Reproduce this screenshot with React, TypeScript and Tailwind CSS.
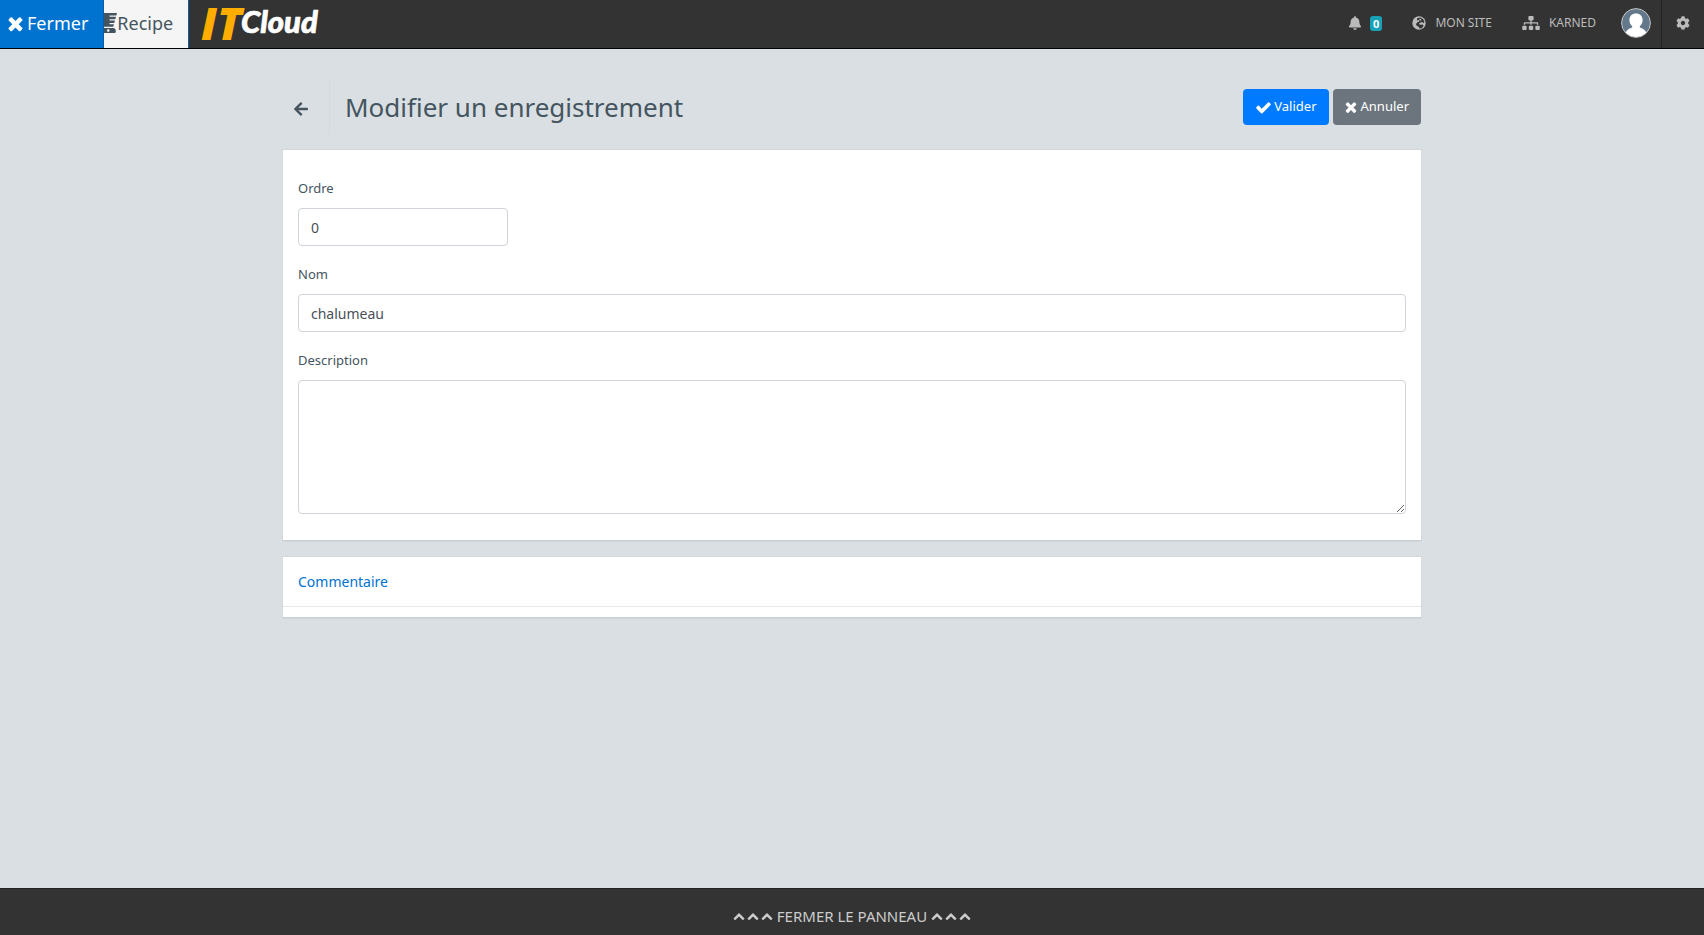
import React from "react";
import { FaArrowLeft, FaBell, FaBlender, FaCog, FaSitemap } from "react-icons/fa";

function Glyph({ d, className }: { d: string; className: string }) {
  return (
    <svg viewBox="0 0 1792 1792" fill="currentColor" aria-hidden="true" className={className}>
      <path d={d} />
    </svg>
  );
}

const CROSS =
  "M1490 1322q0 40-28 68l-136 136q-28 28-68 28t-68-28l-294-294-294 294q-28 28-68 28t-68-28l-136-136q-28-28-28-68t28-68l294-294-294-294q-28-28-28-68t28-68l136-136q28-28 68-28t68 28l294 294 294-294q28-28 68-28t68 28l136 136q28 28 28 68t-28 68l-294 294 294 294q28 28 28 68z";
const TICK =
  "M1671 566q0 40-28 68l-724 724-136 136q-28 28-68 28t-68-28l-136-136-362-362q-28-28-28-68t28-68l136-136q28-28 68-28t68 28l294 295 656-657q28-28 68-28t68 28l136 136q28 28 28 68z";
const CHEVRON =
  "M1683 1331l-166 165q-19 19-45 19t-45-19l-531-531-531 531q-19 19-45 19t-45-19l-166-165q-19-19-19-45.500t19-45.500l742-741q19-19 45-19t45 19l742 741q19 19 19 45.500t-19 45.500z";

function Globe() {
  return (
    <svg viewBox="0 0 14 14" className="size-[14px]" aria-hidden="true">
      <circle cx="7" cy="7" r="6.700" fill="currentColor" />
      <path
        d="M5.200 2.200 8 1.600l3 1.500 1.400 2.700-.6 1.400-1.600-1.200-1.500.5-1.900 1.200 1.200 1 2.600-.2 1 1.200-1.800 2.500-2.300.3-.8-1.700-2-1-.8-1.900 1.600-1.600 1.900-.9-.5-1.400-1.900.5z"
        fill="#333333"
      />
      <path d="M7.200 2.700 9 3l.3 1.400-1.600.3z" fill="currentColor" />
    </svg>
  );
}

function Logo() {
  return (
    <svg width="120" height="40" viewBox="0 0 120 40" role="img" aria-label="IT Cloud" className="overflow-visible">
      <text
        x="0"
        y="36"
        fontFamily="Open Sans, sans-serif"
        fontWeight="800"
        fontStyle="italic"
        fontSize="45"
        fill="#ffae00"
      >
        IT
      </text>
      <text
        x="40"
        y="29"
        fontFamily="Lato, sans-serif"
        fontWeight="900"
        fontStyle="italic"
        fontSize="31"
        fill="#ffffff"
        stroke="#ffffff"
        strokeWidth="0.700"
        strokeLinejoin="round"
      >
        Cloud
      </text>
    </svg>
  );
}

function Avatar() {
  return (
    <svg className="size-[30px]" viewBox="0 0 30 30" aria-hidden="true">
      <defs>
        <clipPath id="avatar-disc">
          <circle cx="15" cy="15" r="14" />
        </clipPath>
      </defs>
      <circle cx="15" cy="15" r="14" fill="#64788c" />
      <g clipPath="url(#avatar-disc)" fill="#ffffff">
        <path d="M15 5.500c4 0 6.600 2.700 6.600 6.600 0 2.700-1.200 4.900-2.800 6.200v1.300c3.200.9 6.700 3 7 7.400V31H4.200v-4c.3-4.400 3.800-6.500 7-7.400v-1.300c-1.600-1.300-2.800-3.500-2.800-6.200 0-3.900 2.600-6.600 6.600-6.600z" />
      </g>
      <circle cx="15" cy="15" r="14.400" fill="none" stroke="#c9cdd1" strokeWidth="1" />
    </svg>
  );
}

function Header() {
  return (
    <header className="flex h-[49px] items-stretch border-b border-black bg-[#333333]">
      <button
        type="button"
        className="flex items-center gap-px border-r border-[#0a5fa8] bg-[#0072d0] pr-[15px] pb-[2px] pl-[5px] text-[18px] text-white"
      >
        <Glyph d={CROSS} className="size-[21px]" />
        Fermer
      </button>
      <a
        href="#recipe"
        className="flex items-center border-r border-[#0a5fa8] bg-[#f5f5f5] pr-[15px] pb-[2px] text-[18px] text-[#455560]"
      >
        <span className="flex w-[13px] justify-end overflow-hidden">
          <FaBlender className="size-[20px] shrink-0" />
        </span>
        Recipe
      </a>
      <a href="#home" className="ml-3 flex items-center">
        <Logo />
      </a>
      <nav className="ml-auto flex items-center text-[12px] text-[#bbbbbb]">
        <a href="#notifications" className="flex items-center gap-[8px] pb-[2px]">
          <FaBell className="size-[14px]" />
          <span className="rounded-[3px] bg-[#17a2b8] px-[3px] text-[11px] leading-[15px] font-bold text-white">0</span>
        </a>
        <a href="#site" className="ml-[30px] flex items-center gap-[9px] pb-[2px]">
          <Globe />
          MON SITE
        </a>
        <a href="#karned" className="ml-[30px] flex items-center gap-[9px] pb-[2px]">
          <FaSitemap className="h-[14px] w-[18px]" />
          KARNED
        </a>
        <a href="#account" aria-label="Compte" className="mr-[10px] ml-[25px] pb-[2px]">
          <Avatar />
        </a>
        <button
          type="button"
          aria-label="Paramètres"
          className="flex w-[43px] items-center justify-center self-stretch border-l border-[#222222] pb-[2px]"
        >
          <FaCog className="size-[14px]" />
        </button>
      </nav>
    </header>
  );
}

const field = "block rounded-[4px] border border-[#ced4da] bg-white px-3 text-[14px] text-[#495057]";
const label = "mb-[10px] block text-[13px] leading-5 text-[#455560]";
const card = "bg-white shadow-[0_0_0_1px_rgba(0,0,0,0.03),0_2px_1px_rgba(0,0,0,0.04)]";

function Chevrons() {
  return (
    <span className="flex gap-[2px]">
      <Glyph d={CHEVRON} className="size-3" />
      <Glyph d={CHEVRON} className="size-3" />
      <Glyph d={CHEVRON} className="size-3" />
    </span>
  );
}

export default function App() {
  return (
    <div className="flex min-h-screen flex-col bg-[#dadfe3] font-['Noto_Sans',sans-serif] text-[#455560]">
      <Header />
      <main className="mx-auto w-full max-w-[1138px] flex-1">
        <div className="flex items-center pt-[30px] pb-[15px]">
          <div className="flex h-[56px] w-[47px] items-center border-r border-[#d3d9dc] pt-1 pl-[10px]">
            <button type="button" aria-label="Retour">
              <FaArrowLeft className="size-4" />
            </button>
          </div>
          <h1 className="ml-[15px] text-[26px] leading-9">Modifier un enregistrement</h1>
          <div className="ml-auto flex gap-1 text-[13px] text-white">
            <button
              type="submit"
              form="record"
              className="flex h-9 items-center gap-[2px] rounded-[4px] bg-[#007bff] px-3"
            >
              <Glyph d={TICK} className="size-[17px]" />
              Valider
            </button>
            <button type="button" className="flex h-9 items-center gap-[2px] rounded-[4px] bg-[#6c757d] pr-3 pl-[10px]">
              <Glyph d={CROSS} className="size-4" />
              Annuler
            </button>
          </div>
        </div>
        <form id="record" onSubmit={(e) => e.preventDefault()} className={`${card} px-[15px] pt-[28px] pb-[26px]`}>
          <div className="mb-[18px]">
            <label htmlFor="ordre" className={label}>Ordre</label>
            <input id="ordre" defaultValue="0" className={`${field} h-[38px] w-[210px]`} />
          </div>
          <div className="mb-[18px]">
            <label htmlFor="nom" className={label}>Nom</label>
            <input id="nom" defaultValue="chalumeau" className={`${field} h-[38px] w-full`} />
          </div>
          <div>
            <label htmlFor="description" className={label}>Description</label>
            <textarea id="description" className={`${field} h-[134px] w-full resize py-2`} />
          </div>
        </form>
        <section className={`${card} mt-[17px] pb-[10px]`}>
          <h2 className="flex h-[50px] items-center border-b border-[#e9e9e9] px-[15px] text-[14px]">
            <a href="#commentaire" className="text-[#0072d0]">Commentaire</a>
          </h2>
        </section>
      </main>
      <footer className="flex h-[47px] justify-center border-t border-[#222222] bg-[#333333] pt-[8px] text-[15px] text-[#cccccc]">
        <button type="button" className="flex items-center gap-1">
          <Chevrons />
          FERMER LE PANNEAU
          <Chevrons />
        </button>
      </footer>
    </div>
  );
}
